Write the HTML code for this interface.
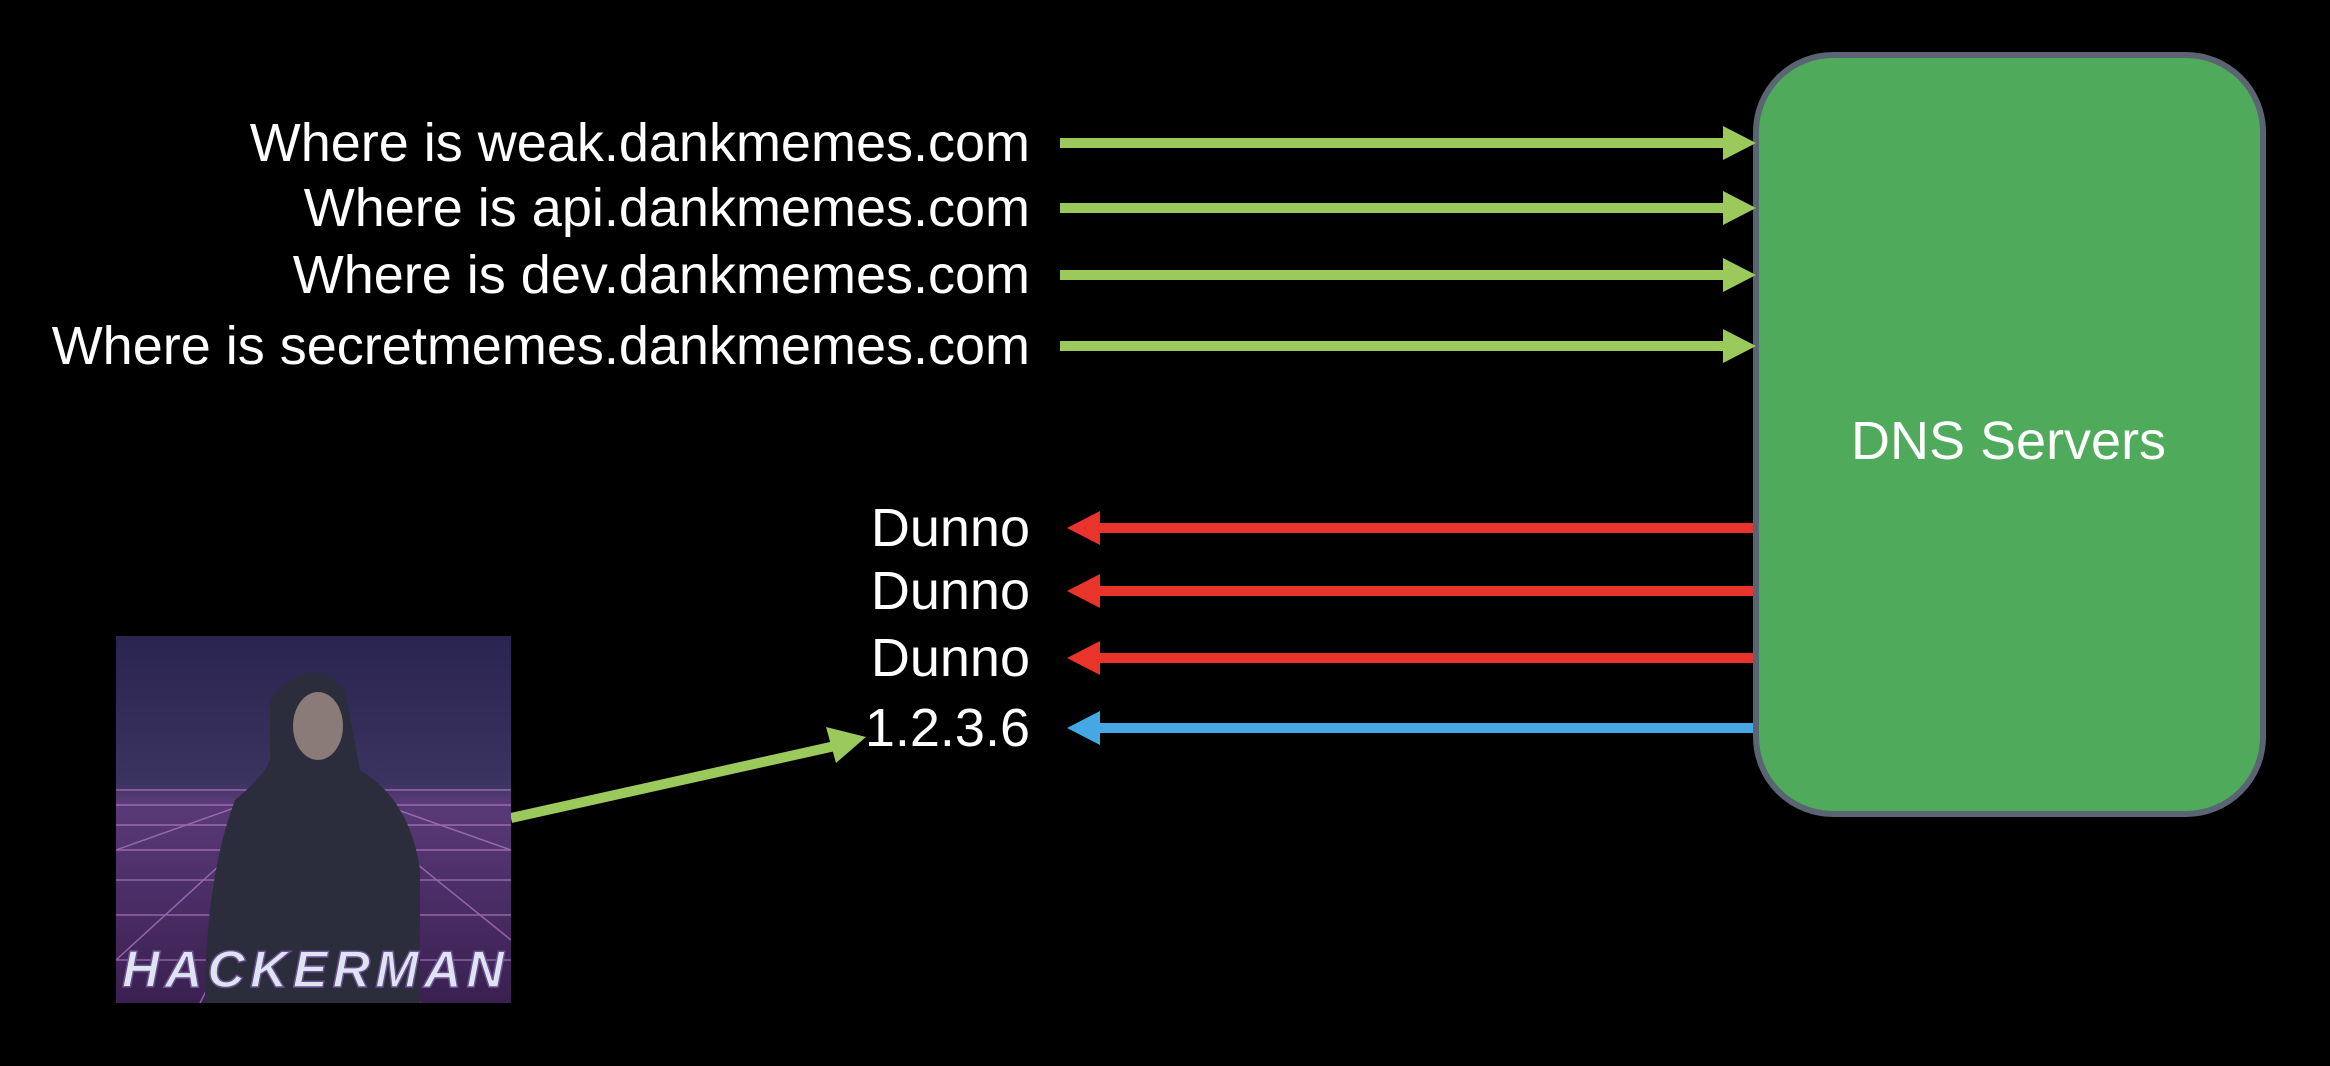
<!DOCTYPE html>
<html><head><style>
html,body{margin:0;padding:0;background:#000;}
body{width:2330px;height:1066px;position:relative;overflow:hidden;font-family:"Liberation Sans",Arial,sans-serif;color:#fff;}
.t{position:absolute;right:1300px;font-size:54px;line-height:54px;white-space:nowrap;}
</style></head><body>
<div class="t" style="top:116px">Where is weak.dankmemes.com</div>
<div class="t" style="top:181px">Where is api.dankmemes.com</div>
<div class="t" style="top:248px">Where is dev.dankmemes.com</div>
<div class="t" style="top:319px">Where is secretmemes.dankmemes.com</div>
<div class="t" style="top:501px">Dunno</div>
<div class="t" style="top:564px">Dunno</div>
<div class="t" style="top:631px">Dunno</div>
<div class="t" style="top:701px">1.2.3.6</div>
<div style="position:absolute;left:1753px;top:52px;width:501px;height:753px;background:#4fab5b;border:6px solid #5b6472;border-radius:80px;"></div>
<div style="position:absolute;left:1851px;top:414px;font-size:54px;line-height:54px;">DNS Servers</div>
<svg width="2330" height="1066" style="position:absolute;left:0;top:0">
<g fill="#9cc95c">
<rect x="1060" y="138" width="668" height="10"/><polygon points="1723,126 1756,143 1723,160"/>
<rect x="1060" y="203" width="668" height="10"/><polygon points="1723,191 1756,208 1723,225"/>
<rect x="1060" y="270" width="668" height="10"/><polygon points="1723,258 1756,275 1723,292"/>
<rect x="1060" y="341" width="668" height="10"/><polygon points="1723,329 1756,346 1723,363"/>
</g>
<g fill="#e8342a">
<rect x="1095" y="523" width="658" height="10"/><polygon points="1100,511 1067,528 1100,545"/>
<rect x="1095" y="586" width="658" height="10"/><polygon points="1100,574 1067,591 1100,608"/>
<rect x="1095" y="653" width="658" height="10"/><polygon points="1100,641 1067,658 1100,675"/>
</g>
<g fill="#45a8e3">
<rect x="1095" y="723" width="658" height="10"/><polygon points="1100,711 1067,728 1100,745"/>
</g>
<line x1="511" y1="818" x2="835" y2="746" stroke="#9cc95c" stroke-width="10"/>
<polygon points="826,727 866,737 836,763" fill="#9cc95c"/>
<defs>
<linearGradient id="bg" x1="0" y1="0" x2="0" y2="1">
<stop offset="0" stop-color="#2a2450"/><stop offset="0.4" stop-color="#3b3360"/><stop offset="0.45" stop-color="#5a3a78"/><stop offset="1" stop-color="#3a2050"/>
</linearGradient>
<clipPath id="c"><rect x="116" y="636" width="395" height="367"/></clipPath>
</defs>
<g clip-path="url(#c)">
<rect x="116" y="636" width="395" height="367" fill="url(#bg)"/>
<g stroke="#c58ad8" stroke-width="1.5" opacity="0.6">
<line x1="116" y1="790" x2="511" y2="790"/><line x1="116" y1="805" x2="511" y2="805"/><line x1="116" y1="825" x2="511" y2="825"/><line x1="116" y1="850" x2="511" y2="850"/><line x1="116" y1="880" x2="511" y2="880"/><line x1="116" y1="915" x2="511" y2="915"/><line x1="116" y1="960" x2="511" y2="960"/>
<line x1="313" y1="780" x2="116" y2="960"/><line x1="313" y1="780" x2="200" y2="1003"/><line x1="313" y1="780" x2="420" y2="1003"/><line x1="313" y1="780" x2="511" y2="940"/><line x1="313" y1="780" x2="511" y2="850"/><line x1="313" y1="780" x2="116" y2="850"/>
</g>
<path d="M270,700 Q310,650 345,690 L360,770 Q410,800 420,870 L420,1003 L205,1003 Q205,880 235,800 Q265,775 270,760 Z" fill="#2c2d3c"/>
<ellipse cx="318" cy="726" rx="25" ry="34" fill="#8a7a78"/>
<text x="122" y="987" font-family="Liberation Sans" font-weight="bold" font-style="italic" font-size="52" fill="#dfe4f2" stroke="#6a5090" stroke-width="1.5" textLength="382">HACKERMAN</text>
</g>
</svg>
</body></html>
